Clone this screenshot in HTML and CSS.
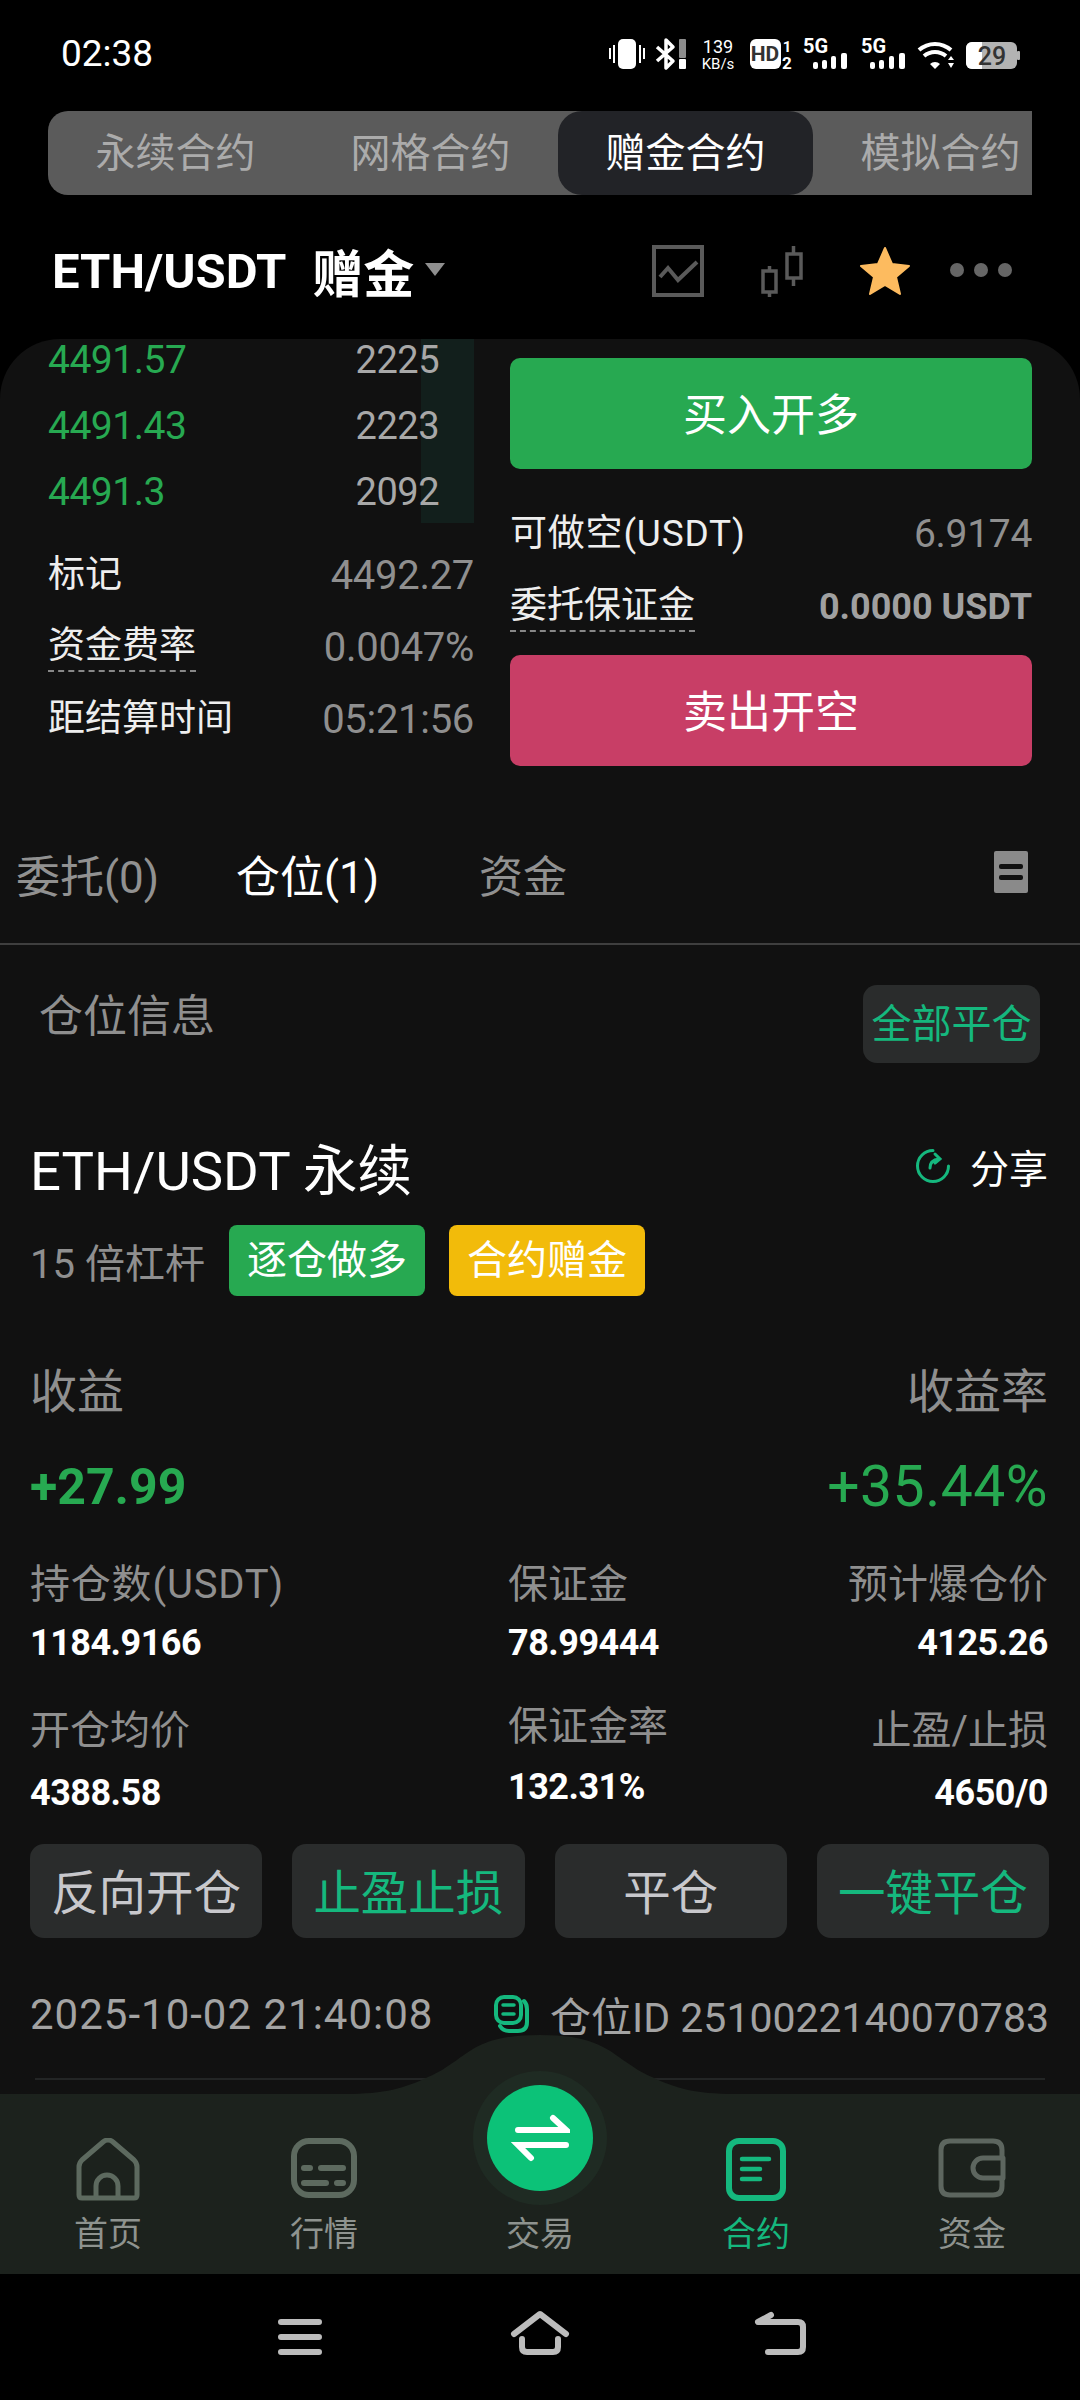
FILE: index.html
```html
<!DOCTYPE html>
<html lang="zh-CN">

<head>
    <meta charset="UTF-8">
    <meta name="viewport" content="width=device-width, initial-scale=1.0">
    <title>赠金合约</title>
    <link rel="stylesheet" href="styles.css">
</head>

<body>
    <div class="phone">
        <div class="status">
            <span class="time">02:38</span>
            <svg class="status-icons" width="420" height="40" viewBox="605 34 420 40">
                <g fill="#fff">
                    <rect x="618" y="39" width="18" height="30" rx="5"/>
                    <rect x="609" y="48" width="2" height="11"/>
                    <rect x="613" y="45" width="2" height="18"/>
                    <rect x="639" y="45" width="2" height="18"/>
                    <rect x="643" y="48" width="2" height="11"/>
                    <rect x="679" y="59" width="7" height="10" rx="1"/>
                    <rect x="750" y="39" width="31" height="30" rx="6"/>
                    <rect x="813" y="62" width="5" height="7" rx="2"/>
                    <rect x="822" y="60" width="5" height="9" rx="2"/>
                    <rect x="831" y="56" width="5" height="13" rx="2"/>
                    <rect x="841" y="53" width="6" height="16" rx="2"/>
                    <rect x="870" y="62" width="5" height="7" rx="2"/>
                    <rect x="879" y="60" width="5" height="9" rx="2"/>
                    <rect x="889" y="56" width="5" height="13" rx="2"/>
                    <rect x="899" y="53" width="6" height="16" rx="2"/>
                    <path d="M935 69l-5-5a7 7 0 0 1 10 0z"/>
                    <path d="M951 56l3 4h-6zM951 68l3-5h-6z"/>
                </g>
                <rect x="679" y="39" width="7" height="19" rx="1" fill="#8c8c8c"/>
                <path d="M657 47l16 14-7 7V40l7 7-16 14" fill="none" stroke="#fff" stroke-width="3.5" stroke-linejoin="round"/>
                <path d="M919 50a24 24 0 0 1 32 0M924 56a17 17 0 0 1 22 0" fill="none" stroke="#fff" stroke-width="4"/>
                <text class="st-small" x="718" y="53" text-anchor="middle" font-size="18">139</text>
                <text class="st-small" x="718" y="69" text-anchor="middle" font-size="15">KB/s</text>
                <text class="st-bold st-dark" x="765" y="61" text-anchor="middle" font-size="21">HD</text>
                <text class="st-bold" x="787" y="52" text-anchor="middle" font-size="15">1</text>
                <text class="st-bold" x="787" y="69" text-anchor="middle" font-size="17">2</text>
                <text class="st-bold" x="803" y="53" font-size="20">5G</text>
                <text class="st-bold" x="861" y="53" font-size="20">5G</text>
                <rect x="966" y="42" width="51" height="27" rx="6" fill="#b3b3b3"/>
                <path d="M972 42h10v27h-10a6 6 0 0 1-6-6V48a6 6 0 0 1 6-6z" fill="#fff"/>
                <rect x="1017" y="51" width="3" height="9" rx="1" fill="#b3b3b3"/>
                <text class="st-dark" x="992" y="65" text-anchor="middle" font-size="25" font-weight="500">29</text>
            </svg>
        </div>

        <div class="mode-tabs">
            <div class="mode-tab">永续合约</div>
            <div class="mode-tab">网格合约</div>
            <div class="mode-tab active">赠金合约</div>
            <div class="mode-tab">模拟合约</div>
        </div>

        <div class="pair-bar">
            <span class="pair-name">ETH/USDT</span>
            <span class="pair-tag">赠金</span>
            <span class="caret"></span>
            <svg class="pair-icons" width="380" height="54" viewBox="640 244 380 54">
                <rect x="654" y="247" width="48" height="48" fill="none" stroke="#5a5a5a" stroke-width="4"/>
                <path d="M660 277l8-9 10 12 19-18" fill="none" stroke="#5a5a5a" stroke-width="4"/>
                <g fill="none" stroke="#5a5a5a" stroke-width="3.5">
                    <rect x="763" y="271" width="13" height="21"/>
                    <path d="M769.500 266v5M769.500 292v5"/>
                    <rect x="787" y="254" width="14" height="24"/>
                    <path d="M793.500 246v8M793.500 278v8"/>
                </g>
                <path d="M885 248l7 16 17 2-13 11 4 17-15-9-15 9 4-17-13-11 17-2z" fill="#fdbb5f" stroke="#fdbb5f" stroke-width="2" stroke-linejoin="round"/>
                <g fill="#666">
                    <circle cx="957" cy="270" r="7"/>
                    <circle cx="981" cy="270" r="7"/>
                    <circle cx="1005" cy="270" r="7"/>
                </g>
            </svg>
        </div>

        <div class="card">
            <div class="market">
                <div class="market-left">
                    <div class="book">
                        <div class="depth"></div>
                        <div class="book-row first"><span class="green">4491.57</span><span class="qty">2225</span></div>
                        <div class="book-row"><span class="green">4491.43</span><span class="qty">2223</span></div>
                        <div class="book-row"><span class="green">4491.3</span><span class="qty">2092</span></div>
                    </div>
                    <div class="info-list">
                        <div class="info-row"><span class="info-label">标记</span><span class="info-val">4492.27</span></div>
                        <div class="info-row"><span class="info-label dashed">资金费率</span><span class="info-val">0.0047%</span></div>
                        <div class="info-row"><span class="info-label">距结算时间</span><span class="info-val">05:21:56</span></div>
                    </div>
                </div>
                <div class="market-right">
                    <div class="trade-btn buy">买入开多</div>
                    <div class="trade-info">
                        <div class="info-row"><span class="info-label loose">可做空(USDT)</span><span class="info-val small">6.9174</span></div>
                        <div class="info-row"><span class="info-label dashed">委托保证金</span><span class="info-val strong">0.0000 USDT</span></div>
                    </div>
                    <div class="trade-btn sell">卖出开空</div>
                </div>
            </div>

            <div class="pos-tabs">
                <div class="pos-tab">委托(0)</div>
                <div class="pos-tab wide active">仓位(1)</div>
                <div class="pos-tab">资金</div>
                <div class="list-icon"><i></i><i></i></div>
            </div>

            <div class="pos-head">
                <span class="pos-head-title">仓位信息</span>
                <span class="close-all">全部平仓</span>
            </div>

            <div class="pos-title">
                <span class="pos-name">ETH/USDT 永续</span>
                <span class="share">
                    <svg width="36" height="36" viewBox="0 0 36 36" fill="none" stroke="#15b87e" stroke-width="3" stroke-linecap="round">
                        <path d="M18 2.500A15.500 15.500 0 1 0 33.500 18"/>
                        <path d="M15 20q0-8 9-9M20 6l5 5-5 4"/>
                    </svg>
                    分享
                </span>
            </div>

            <div class="pos-tags">
                <span class="leverage">15 倍杠杆</span>
                <span class="tag tag-green">逐仓做多</span>
                <span class="tag tag-yellow">合约赠金</span>
            </div>

            <div class="pnl-labels"><span>收益</span><span>收益率</span></div>
            <div class="pnl-vals"><span class="pnl">+27.99</span><span class="pnl-rate">+35.44%</span></div>

            <div class="stats">
                <div class="stat"><div class="stat-label loose">持仓数(USDT)</div><div class="stat-val">1184.9166</div></div>
                <div class="stat"><div class="stat-label">保证金</div><div class="stat-val">78.99444</div></div>
                <div class="stat right"><div class="stat-label">预计爆仓价</div><div class="stat-val">4125.26</div></div>
                <div class="stat next"><div class="stat-label">开仓均价</div><div class="stat-val">4388.58</div></div>
                <div class="stat next tight"><div class="stat-label">保证金率</div><div class="stat-val">132.31%</div></div>
                <div class="stat next right"><div class="stat-label">止盈/止损</div><div class="stat-val">4650/0</div></div>
            </div>

            <div class="actions">
                <div class="action">反向开仓</div>
                <div class="action on">止盈止损</div>
                <div class="action">平仓</div>
                <div class="action on">一键平仓</div>
            </div>

            <div class="meta">
                <span class="meta-time">2025-10-02 21:40:08</span>
                <span class="meta-id">
                    <svg width="36" height="40" viewBox="0 0 36 40" fill="none" stroke="#15b87e" stroke-width="4" stroke-linecap="round">
                        <rect x="3" y="3" width="25" height="26" rx="8"/>
                        <path d="M31 7q3 3 3 8v13q0 9-9 9H16q-6 0-9-5"/>
                        <path d="M10 11h11M10 20h11" stroke-width="3.500"/>
                    </svg>
                    仓位ID 2510022140070783
                </span>
            </div>
            <div class="meta-line"></div>
        </div>

        <div class="nav">
            <svg class="hump" width="1080" height="60" viewBox="0 0 1080 60">
                <path d="M345 60V59C385 59 405 53 428 42C440 37 445 33 457 25C475 12 490 0 540 0C590 0 605 12 623 25C635 33 640 37 652 42C675 53 695 59 735 59V60Z" fill="#1c221d"/>
            </svg>
            <div class="nav-item">
                <svg width="64" height="63" viewBox="0 0 64 63" fill="none" stroke="#5d6a5f" stroke-width="5" stroke-linejoin="round">
                    <path d="M6 60q-3 0-3-3V29q0-4 3-7L27 4q5-4 10 0l21 18q3 3 3 7v28q0 3-3 3z"/>
                    <path d="M20 60V48a11 11 0 0 1 22 0v12"/>
                </svg>
                <span>首页</span>
            </div>
            <div class="nav-item">
                <svg width="66" height="63" viewBox="0 0 66 63" fill="none" stroke="#5d6a5f" stroke-linecap="round">
                    <rect x="3" y="3" width="60" height="54" rx="15" stroke-width="6"/>
                    <path d="M13 30h6M30 30h22M13 45h22M46 45h6" stroke-width="6"/>
                </svg>
                <span>行情</span>
            </div>
            <div class="nav-item center">
                <div class="swap">
                    <svg width="60" height="48" viewBox="0 0 60 48" fill="none" stroke="#fff" stroke-width="6" stroke-linecap="round">
                        <path d="M8 16h48L43 4M56 31H8l13 13"/>
                    </svg>
                </div>
                <span>交易</span>
            </div>
            <div class="nav-item on">
                <svg width="60" height="63" viewBox="0 0 60 63" fill="none" stroke="#15b87e" stroke-linecap="round">
                    <rect x="3" y="3" width="54" height="57" rx="10" stroke-width="6"/>
                    <path d="M16 21h27M16 31h18M16 41h18" stroke-width="4.500"/>
                </svg>
                <span>合约</span>
            </div>
            <div class="nav-item">
                <svg width="68" height="63" viewBox="0 0 68 63" fill="none" stroke="#5d665f" stroke-width="5">
                    <path d="M64 18v-6q0-9-9-9H12q-9 0-9 9v36q0 9 9 9h43q9 0 9-9v-6"/>
                    <path d="M65 20H45a10 10 0 0 0 0 20h20z" stroke-linejoin="round"/>
                </svg>
                <span>资金</span>
            </div>
        </div>

        <div class="sys-nav">
            <svg width="540" height="50" viewBox="270 2310 540 50" fill="none" stroke="#bcbcbc" stroke-width="6" stroke-linecap="round" stroke-linejoin="round">
                <path d="M281 2322h38M281 2337h38M281 2352h38"/>
                <path d="M514 2334l26-20 26 20"/>
                <path d="M522 2339v8q0 5 5 5h26q5 0 5-5v-8"/>
                <path d="M771 2315l-13 7h40q5 0 5 5v20q0 5-5 5h-30"/>
            </svg>
        </div>
    </div>
</body>

</html>
```

FILE: styles.css
```css
* {
    box-sizing: border-box;
}

body {
    margin: 0;
    background-color: #000;
    font-family: Roboto, "Noto Sans CJK SC", sans-serif;
}

.phone {
    width: 1080px;
    height: 2400px;
    display: flex;
    flex-direction: column;
    background-color: #000;
    color: #fff;
    overflow: hidden;
}

/* status bar */
.status {
    height: 111px;
    flex-shrink: 0;
    display: flex;
    justify-content: space-between;
    align-items: flex-start;
    padding: 34px 55px 0 61px;
}

.time {
    font-size: 37px;
    line-height: 40px;
}

.status-icons text {
    fill: #fff;
    font-family: Roboto, sans-serif;
}

.status-icons .st-bold {
    font-weight: 700;
}

.status-icons .st-dark {
    fill: #333;
}

/* top tabs */
.mode-tabs {
    height: 84px;
    flex-shrink: 0;
    width: 984px;
    margin-left: 48px;
    display: flex;
    background-color: #5b5b5b;
    border-radius: 20px 0 0 20px;
}

.mode-tab {
    width: 255px;
    flex-shrink: 0;
    text-align: center;
    font-size: 40px;
    line-height: 86px;
    color: #ababab;
}

.mode-tab:last-child {
    width: 219px;
    padding-left: 36px;
    white-space: nowrap;
}

.mode-tab.active {
    background-color: #222327;
    border-radius: 24px;
    color: #fff;
}

.pair-bar {
    height: 144px;
    flex-shrink: 0;
    display: flex;
    align-items: center;
    padding: 8px 60px 0 52px;
}

.pair-name {
    font-size: 49px;
    font-weight: 700;
}

.pair-tag {
    font-size: 51px;
    font-weight: 700;
    margin-left: 26px;
}

.caret {
    width: 0;
    height: 0;
    border-left: 10px solid transparent;
    border-right: 10px solid transparent;
    border-top: 13px solid #8f8f8f;
    margin-left: 11px;
    margin-top: -4px;
}

.pair-icons {
    margin-left: auto;
}

/* main card */
.card {
    flex: 1;
    background-color: #111;
    border-radius: 60px 60px 0 0;
    overflow: hidden;
}

.market {
    height: 470px;
    display: flex;
    gap: 36px;
    padding: 0 48px;
}

.market-left {
    width: 426px;
}

.market-right {
    flex: 1;
    padding-top: 19px;
}

.book {
    position: relative;
}

.depth {
    position: absolute;
    top: 0;
    right: 0;
    width: 53px;
    height: 184px;
    background-color: #121f1c;
}

.book-row {
    position: relative;
    height: 66px;
    line-height: 66px;
    display: flex;
    justify-content: space-between;
    padding-right: 35px;
    font-size: 39px;
    letter-spacing: -0.5px;
    color: #a8a8a8;
}

.book-row.first {
    height: 54px;
    line-height: 42px;
}

.qty {
    font-size: 38px;
}

.green {
    color: #27a951;
}

.info-list {
    margin-top: 14px;
}

.info-row {
    height: 72px;
    display: flex;
    justify-content: space-between;
    align-items: center;
}

.info-label {
    font-size: 37px;
    line-height: 48px;
    color: #eee;
}

.loose {
    letter-spacing: 0.8px;
}

.dashed {
    border-bottom: 2px dashed #888;
}

.info-val {
    font-size: 40px;
    letter-spacing: -0.3px;
    color: #8f8f8f;
}

.info-val.small {
    font-size: 39px;
}

.info-val.strong {
    font-size: 36px;
    font-weight: 700;
    letter-spacing: 0;
    color: #a0a0a0;
}

.trade-btn {
    height: 111px;
    border-radius: 10px;
    text-align: center;
    font-size: 44px;
    line-height: 117px;
}

.buy {
    background-color: #27a951;
}

.sell {
    background-color: #c83e66;
}

.trade-info {
    margin: 28px 0 12px;
}

.trade-info .info-row {
    height: 73px;
}

/* order / position tabs */
.pos-tabs {
    height: 136px;
    display: flex;
    align-items: center;
    padding: 0 52px 5px 16px;
    border-bottom: 2px solid #3f3f3f;
}

.pos-tab {
    width: 220px;
    font-size: 44px;
    color: #919191;
}

.pos-tab.wide {
    width: 243px;
}

.pos-tab.active {
    color: #fff;
}

.list-icon {
    width: 34px;
    height: 42px;
    margin-left: auto;
    margin-top: -3px;
    background-color: #8a8a8a;
    border-radius: 2px;
    display: flex;
    flex-direction: column;
    gap: 6px;
    justify-content: center;
    align-items: center;
}

.list-icon i {
    width: 24px;
    height: 5px;
    background-color: #111;
    border-radius: 2px;
}

.pos-head {
    display: flex;
    justify-content: space-between;
    align-items: flex-start;
    padding: 40px 40px 0 39px;
}

.pos-head-title {
    font-size: 44px;
    line-height: 64px;
    color: #8f8f8f;
}

.close-all {
    width: 177px;
    height: 78px;
    background-color: #2a2c2c;
    border-radius: 14px;
    text-align: center;
    font-size: 40px;
    line-height: 80px;
    color: #15b87e;
}

.pos-title {
    height: 80px;
    margin-top: 63px;
    padding: 0 32px 0 30px;
    display: flex;
    justify-content: space-between;
    align-items: center;
}

.pos-name {
    font-size: 54.500px;
}

.share {
    display: flex;
    align-items: center;
    gap: 19px;
    font-size: 39px;
}

.pos-tags {
    height: 71px;
    margin-top: 19px;
    padding-left: 30px;
    display: flex;
    align-items: center;
}

.leverage {
    width: 199px;
    font-size: 40px;
    color: #8f8f8f;
}

.tag {
    width: 196px;
    height: 71px;
    margin-right: 24px;
    border-radius: 8px;
    text-align: center;
    font-size: 40px;
    line-height: 71px;
}

.tag-green {
    background-color: #27a951;
}

.tag-yellow {
    background-color: #f2bb0a;
}

.pnl-labels,
.pnl-vals {
    display: flex;
    justify-content: space-between;
    padding: 0 32px 0 30px;
}

.pnl-labels {
    height: 60px;
    margin-top: 64px;
    line-height: 64px;
    font-size: 47px;
    color: #8f8f8f;
}

.pnl-vals {
    height: 70px;
    margin-top: 32px;
    line-height: 70px;
    color: #27a951;
}

.pnl {
    font-size: 50px;
    font-weight: 700;
}

.pnl-rate {
    font-size: 57px;
    letter-spacing: 0.5px;
}

.stats {
    display: grid;
    grid-template-columns: 478px 1fr auto;
    padding: 0 32px 0 30px;
    margin-top: 38px;
}

.stat-label {
    font-size: 40px;
    line-height: 50px;
    color: #8f8f8f;
}

.stat-val {
    margin-top: 11px;
    font-size: 36px;
    line-height: 44px;
    font-weight: 700;
    letter-spacing: -0.5px;
}

.stat.right {
    text-align: right;
}

.stat.next {
    margin-top: 41px;
}

.stat.next .stat-val {
    margin-top: 15px;
}

.stat.next.tight {
    margin-top: 37px;
}

.stat.next.tight .stat-val {
    margin-top: 13px;
}

.actions {
    display: flex;
    gap: 30px;
    padding: 0 31px 0 30px;
    margin-top: 29px;
}

.action {
    flex: 1;
    height: 94px;
    background-color: #2a2c2c;
    border-radius: 14px;
    text-align: center;
    font-size: 47.500px;
    line-height: 100px;
    color: #c8c8cc;
}

.action.on {
    color: #15b87e;
}

.meta {
    height: 60px;
    margin-top: 46px;
    padding: 0 31px 0 30px;
    display: flex;
    justify-content: space-between;
    align-items: center;
    color: #a3a3a3;
}

.meta-time {
    font-size: 42px;
    letter-spacing: 1px;
}

.meta-id {
    display: flex;
    align-items: center;
    gap: 21px;
    font-size: 41px;
}

.meta-line {
    height: 2px;
    margin: 34px 35px 0;
    background-color: #232525;
}

/* bottom navigation */
.nav {
    height: 180px;
    flex-shrink: 0;
    position: relative;
    display: grid;
    grid-template-columns: repeat(5, 1fr);
    background-color: #1c221d;
}

.hump {
    position: absolute;
    left: 0;
    bottom: 179px;
}

.nav-item {
    position: relative;
    display: flex;
    flex-direction: column;
    align-items: center;
    padding-top: 44px;
    font-size: 34px;
    color: #8e938f;
}

.nav-item span {
    margin-top: 13px;
    line-height: 40px;
}

.nav-item.on {
    color: #15b87e;
}

.nav-item.center {
    padding-top: 107px;
}

.swap {
    position: absolute;
    top: -9px;
    left: 55px;
    width: 106px;
    height: 106px;
    display: flex;
    align-items: center;
    justify-content: center;
    background-color: #0cc278;
    border-radius: 50%;
    box-shadow: 0 0 0 14px #1f2b23;
}

.sys-nav {
    height: 126px;
    flex-shrink: 0;
    display: flex;
    justify-content: center;
    padding-top: 36px;
}
```
